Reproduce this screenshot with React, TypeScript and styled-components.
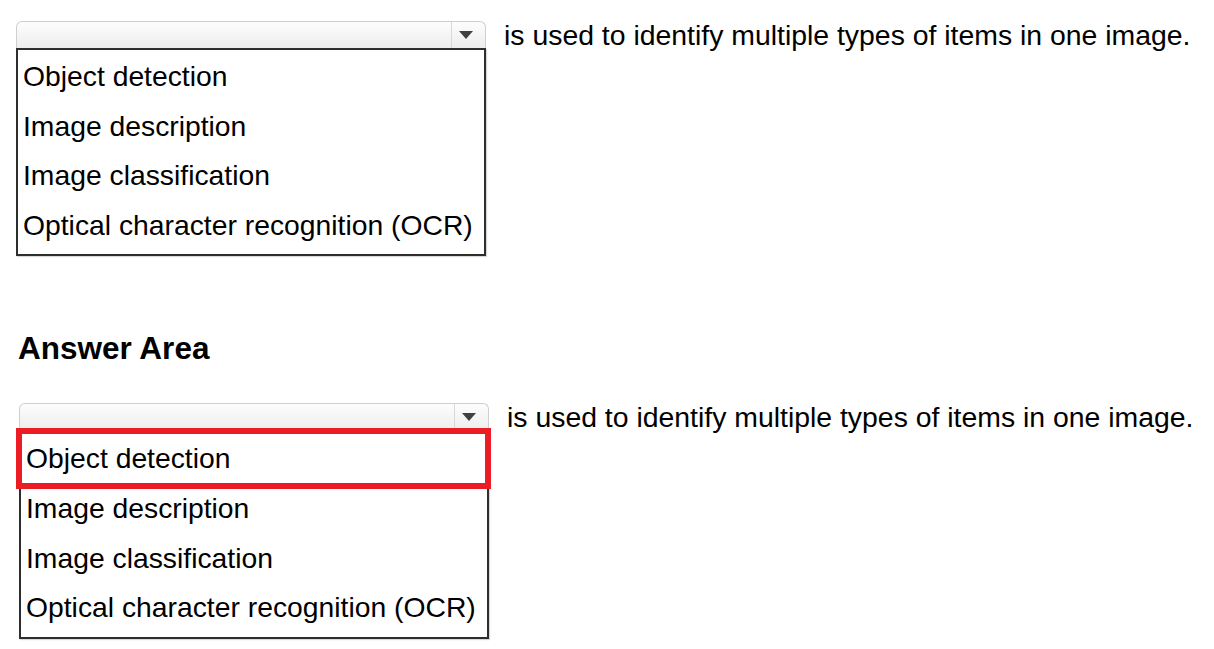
import * as React from "react";
import styled, { createGlobalStyle } from "styled-components";

const GlobalStyle = createGlobalStyle`
  html, body {
    margin: 0;
    padding: 0;
    background: #ffffff;
  }
  body {
    font-family: "Liberation Sans", Arial, sans-serif;
    color: #000;
  }
`;

const options = [
  "Object detection",
  "Image description",
  "Image classification",
  "Optical character recognition (OCR)",
];

const Page = styled.div`
  display: flex;
  flex-direction: column;
  padding: 21px 0 0 16px;
  width: 1214px;
  height: 649px;
  box-sizing: border-box;
`;

const Block = styled.div<{ $shift?: number }>`
  display: flex;
  align-items: flex-start;
  gap: 18px;
  margin-left: ${(p) => p.$shift ?? 0}px;
`;

const Column = styled.div`
  display: flex;
  flex-direction: column;
  width: 470px;
`;

const Select = styled.div`
  display: flex;
  height: 27px;
  box-sizing: border-box;
  border: 1px solid #cfcfcf;
  border-bottom: none;
  border-radius: 6px 6px 0 0;
  background: linear-gradient(#fdfdfd, #ededed);
`;

const SelectValue = styled.div`
  flex: 1;
`;

const ArrowCell = styled.div`
  width: 34px;
  display: flex;
  align-items: center;
  justify-content: center;
  padding-right: 5px;
  box-sizing: border-box;
  border-left: 1px solid #d8d8d8;
`;

const Arrow = styled.div`
  width: 0;
  height: 0;
  border-left: 7px solid transparent;
  border-right: 7px solid transparent;
  border-top: 8px solid #404040;
`;

const List = styled.ul`
  position: relative;
  list-style: none;
  margin: 0;
  padding: 2px 0 4px;
  border: 2px solid #2e2e2e;
  box-shadow: 1px 1px 1px rgba(0, 0, 0, 0.15);
  width: 470px;
  box-sizing: border-box;
`;

const Item = styled.li`
  height: 49.6px;
  line-height: 49.6px;
  font-size: 28.3px;
  padding-left: 5px;
  white-space: nowrap;
`;

const Highlight = styled.div`
  position: absolute;
  left: -5px;
  top: -4px;
  width: 475px;
  height: 61px;
  box-sizing: border-box;
  border: 6px solid #ec1c24;
  pointer-events: none;
`;

const Sentence = styled.div`
  font-size: 28.4px;
  line-height: 28px;
  white-space: nowrap;
`;

const Heading = styled.h2`
  margin: 74px 0 37px 2px;
  font-size: 31.5px;
  line-height: 36px;
  font-weight: bold;
`;

const Dropdown: React.FC<{ marked?: boolean }> = ({ marked }) => (
  <Column>
    <Select>
      <SelectValue />
      <ArrowCell>
        <Arrow />
      </ArrowCell>
    </Select>
    <List>
      {marked && <Highlight />}
      {options.map((o) => (
        <Item key={o}>{o}</Item>
      ))}
    </List>
  </Column>
);

export default function App() {
  return (
    <>
      <GlobalStyle />
      <Page>
        <Block>
          <Dropdown />
          <Sentence>is used to identify multiple types of items in one image.</Sentence>
        </Block>
        <Heading>Answer Area</Heading>
        <Block $shift={3}>
          <Dropdown marked />
          <Sentence>is used to identify multiple types of items in one image.</Sentence>
        </Block>
      </Page>
    </>
  );
}
